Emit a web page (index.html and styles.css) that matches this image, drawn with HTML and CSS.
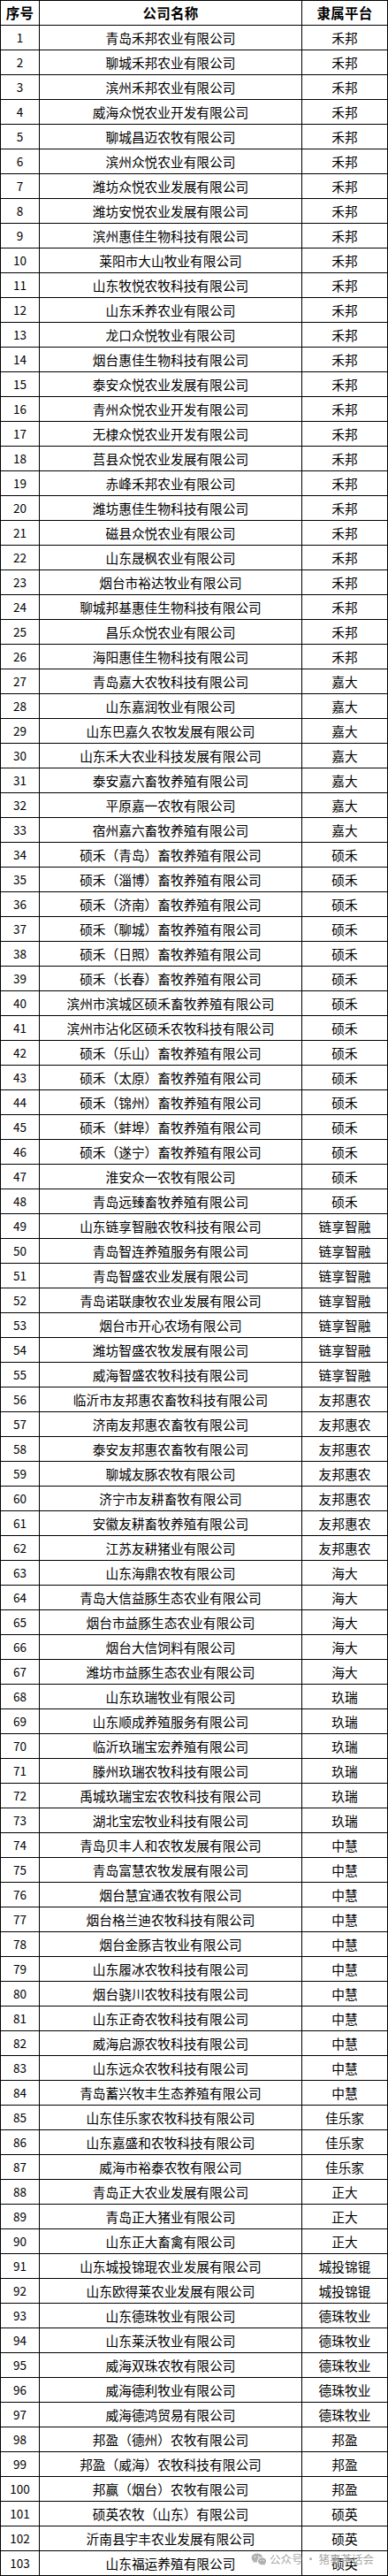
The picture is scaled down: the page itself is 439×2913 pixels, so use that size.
FILE: index.html
```html
<!DOCTYPE html>
<html lang="zh-CN">
<head>
<meta charset="utf-8">
<title>公司名单</title>
<link rel="stylesheet" href="styles.css">
</head>
<body>
<div class="sheet">
<table class="list">
<colgroup><col class="c-no"><col class="c-name"><col class="c-plat"></colgroup>
<thead>
<tr><th>序号</th><th>公司名称</th><th>隶属平台</th></tr>
</thead>
<tbody>
<tr><td class="no">1</td><td>青岛禾邦农业有限公司</td><td>禾邦</td></tr>
<tr><td class="no">2</td><td>聊城禾邦农业有限公司</td><td>禾邦</td></tr>
<tr><td class="no">3</td><td>滨州禾邦农业有限公司</td><td>禾邦</td></tr>
<tr><td class="no">4</td><td>威海众悦农业开发有限公司</td><td>禾邦</td></tr>
<tr><td class="no">5</td><td>聊城昌迈农牧有限公司</td><td>禾邦</td></tr>
<tr><td class="no">6</td><td>滨州众悦农业有限公司</td><td>禾邦</td></tr>
<tr><td class="no">7</td><td>潍坊众悦农业发展有限公司</td><td>禾邦</td></tr>
<tr><td class="no">8</td><td>潍坊安悦农业发展有限公司</td><td>禾邦</td></tr>
<tr><td class="no">9</td><td>滨州惠佳生物科技有限公司</td><td>禾邦</td></tr>
<tr><td class="no">10</td><td>莱阳市大山牧业有限公司</td><td>禾邦</td></tr>
<tr><td class="no">11</td><td>山东牧悦农牧科技有限公司</td><td>禾邦</td></tr>
<tr><td class="no">12</td><td>山东禾养农业有限公司</td><td>禾邦</td></tr>
<tr><td class="no">13</td><td>龙口众悦牧业有限公司</td><td>禾邦</td></tr>
<tr><td class="no">14</td><td>烟台惠佳生物科技有限公司</td><td>禾邦</td></tr>
<tr><td class="no">15</td><td>泰安众悦农业发展有限公司</td><td>禾邦</td></tr>
<tr><td class="no">16</td><td>青州众悦农业开发有限公司</td><td>禾邦</td></tr>
<tr><td class="no">17</td><td>无棣众悦农业开发有限公司</td><td>禾邦</td></tr>
<tr><td class="no">18</td><td>莒县众悦农业发展有限公司</td><td>禾邦</td></tr>
<tr><td class="no">19</td><td>赤峰禾邦农业有限公司</td><td>禾邦</td></tr>
<tr><td class="no">20</td><td>潍坊惠佳生物科技有限公司</td><td>禾邦</td></tr>
<tr><td class="no">21</td><td>磁县众悦农业有限公司</td><td>禾邦</td></tr>
<tr><td class="no">22</td><td>山东晟枫农业有限公司</td><td>禾邦</td></tr>
<tr><td class="no">23</td><td>烟台市裕达牧业有限公司</td><td>禾邦</td></tr>
<tr><td class="no">24</td><td>聊城邦基惠佳生物科技有限公司</td><td>禾邦</td></tr>
<tr><td class="no">25</td><td>昌乐众悦农业有限公司</td><td>禾邦</td></tr>
<tr><td class="no">26</td><td>海阳惠佳生物科技有限公司</td><td>禾邦</td></tr>
<tr><td class="no">27</td><td>青岛嘉大农牧科技有限公司</td><td>嘉大</td></tr>
<tr><td class="no">28</td><td>山东嘉润牧业有限公司</td><td>嘉大</td></tr>
<tr><td class="no">29</td><td>山东巴嘉久农牧发展有限公司</td><td>嘉大</td></tr>
<tr><td class="no">30</td><td>山东禾大农业科技发展有限公司</td><td>嘉大</td></tr>
<tr><td class="no">31</td><td>泰安嘉六畜牧养殖有限公司</td><td>嘉大</td></tr>
<tr><td class="no">32</td><td>平原嘉一农牧有限公司</td><td>嘉大</td></tr>
<tr><td class="no">33</td><td>宿州嘉六畜牧养殖有限公司</td><td>嘉大</td></tr>
<tr><td class="no">34</td><td>硕禾（青岛）畜牧养殖有限公司</td><td>硕禾</td></tr>
<tr><td class="no">35</td><td>硕禾（淄博）畜牧养殖有限公司</td><td>硕禾</td></tr>
<tr><td class="no">36</td><td>硕禾（济南）畜牧养殖有限公司</td><td>硕禾</td></tr>
<tr><td class="no">37</td><td>硕禾（聊城）畜牧养殖有限公司</td><td>硕禾</td></tr>
<tr><td class="no">38</td><td>硕禾（日照）畜牧养殖有限公司</td><td>硕禾</td></tr>
<tr><td class="no">39</td><td>硕禾（长春）畜牧养殖有限公司</td><td>硕禾</td></tr>
<tr><td class="no">40</td><td>滨州市滨城区硕禾畜牧养殖有限公司</td><td>硕禾</td></tr>
<tr><td class="no">41</td><td>滨州市沾化区硕禾农牧科技有限公司</td><td>硕禾</td></tr>
<tr><td class="no">42</td><td>硕禾（乐山）畜牧养殖有限公司</td><td>硕禾</td></tr>
<tr><td class="no">43</td><td>硕禾（太原）畜牧养殖有限公司</td><td>硕禾</td></tr>
<tr><td class="no">44</td><td>硕禾（锦州）畜牧养殖有限公司</td><td>硕禾</td></tr>
<tr><td class="no">45</td><td>硕禾（蚌埠）畜牧养殖有限公司</td><td>硕禾</td></tr>
<tr><td class="no">46</td><td>硕禾（遂宁）畜牧养殖有限公司</td><td>硕禾</td></tr>
<tr><td class="no">47</td><td>淮安众一农牧有限公司</td><td>硕禾</td></tr>
<tr><td class="no">48</td><td>青岛远臻畜牧养殖有限公司</td><td>硕禾</td></tr>
<tr><td class="no">49</td><td>山东链享智融农牧科技有限公司</td><td>链享智融</td></tr>
<tr><td class="no">50</td><td>青岛智连养殖服务有限公司</td><td>链享智融</td></tr>
<tr><td class="no">51</td><td>青岛智盛农业发展有限公司</td><td>链享智融</td></tr>
<tr><td class="no">52</td><td>青岛诺联康牧农业发展有限公司</td><td>链享智融</td></tr>
<tr><td class="no">53</td><td>烟台市开心农场有限公司</td><td>链享智融</td></tr>
<tr><td class="no">54</td><td>潍坊智盛农牧发展有限公司</td><td>链享智融</td></tr>
<tr><td class="no">55</td><td>威海智盛农牧科技有限公司</td><td>链享智融</td></tr>
<tr><td class="no">56</td><td>临沂市友邦惠农畜牧科技有限公司</td><td>友邦惠农</td></tr>
<tr><td class="no">57</td><td>济南友邦惠农畜牧有限公司</td><td>友邦惠农</td></tr>
<tr><td class="no">58</td><td>泰安友邦惠农畜牧有限公司</td><td>友邦惠农</td></tr>
<tr><td class="no">59</td><td>聊城友豚农牧有限公司</td><td>友邦惠农</td></tr>
<tr><td class="no">60</td><td>济宁市友耕畜牧有限公司</td><td>友邦惠农</td></tr>
<tr><td class="no">61</td><td>安徽友耕畜牧养殖有限公司</td><td>友邦惠农</td></tr>
<tr><td class="no">62</td><td>江苏友耕猪业有限公司</td><td>友邦惠农</td></tr>
<tr><td class="no">63</td><td>山东海鼎农牧有限公司</td><td>海大</td></tr>
<tr><td class="no">64</td><td>青岛大信益豚生态农业有限公司</td><td>海大</td></tr>
<tr><td class="no">65</td><td>烟台市益豚生态农业有限公司</td><td>海大</td></tr>
<tr><td class="no">66</td><td>烟台大信饲料有限公司</td><td>海大</td></tr>
<tr><td class="no">67</td><td>潍坊市益豚生态农业有限公司</td><td>海大</td></tr>
<tr><td class="no">68</td><td>山东玖瑞牧业有限公司</td><td>玖瑞</td></tr>
<tr><td class="no">69</td><td>山东顺成养殖服务有限公司</td><td>玖瑞</td></tr>
<tr><td class="no">70</td><td>临沂玖瑞宝宏养殖有限公司</td><td>玖瑞</td></tr>
<tr><td class="no">71</td><td>滕州玖瑞农牧科技有限公司</td><td>玖瑞</td></tr>
<tr><td class="no">72</td><td>禹城玖瑞宝宏农牧科技有限公司</td><td>玖瑞</td></tr>
<tr><td class="no">73</td><td>湖北宝宏牧业科技有限公司</td><td>玖瑞</td></tr>
<tr><td class="no">74</td><td>青岛贝丰人和农牧发展有限公司</td><td>中慧</td></tr>
<tr><td class="no">75</td><td>青岛富慧农牧发展有限公司</td><td>中慧</td></tr>
<tr><td class="no">76</td><td>烟台慧宜通农牧有限公司</td><td>中慧</td></tr>
<tr><td class="no">77</td><td>烟台格兰迪农牧科技有限公司</td><td>中慧</td></tr>
<tr><td class="no">78</td><td>烟台金豚吉牧业有限公司</td><td>中慧</td></tr>
<tr><td class="no">79</td><td>山东履冰农牧科技有限公司</td><td>中慧</td></tr>
<tr><td class="no">80</td><td>烟台骁川农牧科技有限公司</td><td>中慧</td></tr>
<tr><td class="no">81</td><td>山东正奇农牧科技有限公司</td><td>中慧</td></tr>
<tr><td class="no">82</td><td>威海启源农牧科技有限公司</td><td>中慧</td></tr>
<tr><td class="no">83</td><td>山东远众农牧科技有限公司</td><td>中慧</td></tr>
<tr><td class="no">84</td><td>青岛蓄兴牧丰生态养殖有限公司</td><td>中慧</td></tr>
<tr><td class="no">85</td><td>山东佳乐家农牧科技有限公司</td><td>佳乐家</td></tr>
<tr><td class="no">86</td><td>山东嘉盛和农牧科技有限公司</td><td>佳乐家</td></tr>
<tr><td class="no">87</td><td>威海市裕泰农牧有限公司</td><td>佳乐家</td></tr>
<tr><td class="no">88</td><td>青岛正大农业发展有限公司</td><td>正大</td></tr>
<tr><td class="no">89</td><td>青岛正大猪业有限公司</td><td>正大</td></tr>
<tr><td class="no">90</td><td>山东正大畜禽有限公司</td><td>正大</td></tr>
<tr><td class="no">91</td><td>山东城投锦琨农业发展有限公司</td><td>城投锦锟</td></tr>
<tr><td class="no">92</td><td>山东欧得莱农业发展有限公司</td><td>城投锦锟</td></tr>
<tr><td class="no">93</td><td>山东德珠牧业有限公司</td><td>德珠牧业</td></tr>
<tr><td class="no">94</td><td>山东莱沃牧业有限公司</td><td>德珠牧业</td></tr>
<tr><td class="no">95</td><td>威海双珠农牧有限公司</td><td>德珠牧业</td></tr>
<tr><td class="no">96</td><td>威海德利牧业有限公司</td><td>德珠牧业</td></tr>
<tr><td class="no">97</td><td>威海德鸿贸易有限公司</td><td>德珠牧业</td></tr>
<tr><td class="no">98</td><td>邦盈（德州）农牧有限公司</td><td>邦盈</td></tr>
<tr><td class="no">99</td><td>邦盈（威海）农牧科技有限公司</td><td>邦盈</td></tr>
<tr><td class="no">100</td><td>邦赢（烟台）农牧有限公司</td><td>邦盈</td></tr>
<tr><td class="no">101</td><td>硕英农牧（山东）有限公司</td><td>硕英</td></tr>
<tr><td class="no">102</td><td>沂南县宇丰农业发展有限公司</td><td>硕英</td></tr>
<tr><td class="no">103</td><td>山东福运养殖有限公司</td><td>硕英</td></tr>
</tbody>
</table>
<div class="watermark">
<svg class="wm-icon" width="17" height="15" viewBox="0 0 17 15" aria-hidden="true">
<path d="M6.6 0.6C3.2 0.6 0.6 2.8 0.6 5.6c0 1.6 0.9 3 2.3 3.9L2.3 11.3l2.1-1.1c0.7 0.2 1.4 0.3 2.2 0.3 0.2 0 0.4 0 0.6 0-0.1-0.4-0.2-0.8-0.2-1.3 0-2.7 2.5-4.8 5.6-4.8 0.2 0 0.4 0 0.6 0C12.6 2.3 9.9 0.6 6.6 0.6z" fill="#a9a9a9"/>
<path d="M12.6 5.3c-2.6 0-4.7 1.8-4.7 4s2.1 4 4.7 4c0.6 0 1.1-0.1 1.6-0.2l1.7 0.9-0.5-1.5c1.1-0.7 1.9-1.9 1.9-3.2 0-2.2-2.1-4-4.7-4z" fill="#a9a9a9"/>
<circle cx="4.6" cy="4.4" r="0.8" fill="#fff"/>
<circle cx="8.6" cy="4.4" r="0.8" fill="#fff"/>
<circle cx="11.0" cy="8.6" r="0.65" fill="#fff"/>
<circle cx="14.2" cy="8.6" r="0.65" fill="#fff"/>
</svg>
<span class="wm-text">公众号 · 猪事茶话会</span>
</div>
</div>
</body>
</html>
```

FILE: styles.css
```css
body {
  margin: 0;
  background: #fff;
}

.sheet {
  position: relative;
  width: 439px;
}

.list {
  border-collapse: separate;
  border-spacing: 1px;
  background: #000;
  table-layout: fixed;
  width: 439px;
  font-family: "Noto Sans CJK SC", "Noto Sans", sans-serif;
  color: #000;
}

.c-no { width: 43px; }
.c-name { width: 296px; }
.c-plat { width: 96px; }

.list th,
.list td {
  height: 27px;
  padding: 0;
  background: #fff;
  text-align: center;
  vertical-align: middle;
  white-space: nowrap;
  overflow: hidden;
}

.list th {
  font-size: 15.5px;
  font-weight: bold;
  letter-spacing: 0.3px;
  line-height: 27px;
}

.list td {
  font-size: 14.7px;
  font-weight: normal;
  line-height: 27px;
}

.list td.no {
  font-size: 13.5px;
}

.watermark {
  position: absolute;
  right: 16px;
  bottom: 10px;
  display: flex;
  align-items: center;
  gap: 4px;
  height: 18px;
  pointer-events: none;
}

.wm-icon {
  display: block;
  opacity: 0.9;
}

.wm-text {
  font-family: "Noto Sans CJK SC", "Noto Sans", sans-serif;
  font-size: 12.5px;
  line-height: 18px;
  color: rgba(150, 150, 150, 0.85);
  text-shadow: 0 0 2px rgba(255, 255, 255, 0.9);
  white-space: nowrap;
}
```
